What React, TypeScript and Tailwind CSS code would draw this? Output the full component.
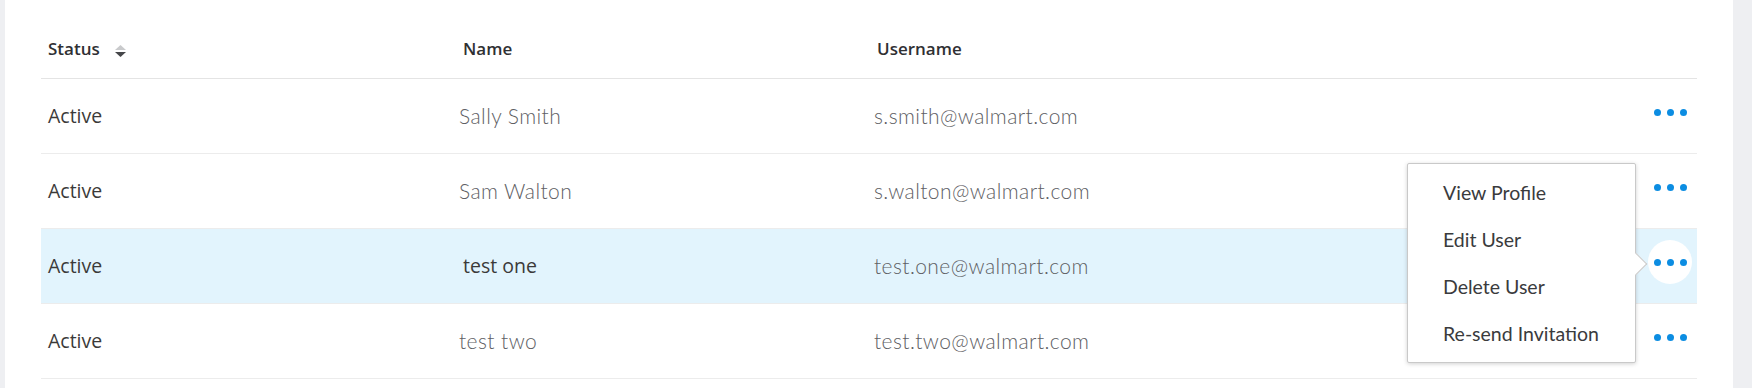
import React from "react";

type User = {
  status: string;
  name: string;
  username: string;
  selected?: boolean;
};

const users: User[] = [
  { status: "Active", name: "Sally Smith", username: "s.smith@walmart.com" },
  { status: "Active", name: "Sam Walton", username: "s.walton@walmart.com" },
  { status: "Active", name: "test one", username: "test.one@walmart.com", selected: true },
  { status: "Active", name: "test two", username: "test.two@walmart.com" },
];

const myriad = "font-['Open_Sans',sans-serif]";
const bogle = "font-['Lato',sans-serif]";

const SortIcon = () => (
  <svg width="11" height="12" viewBox="0 0 11 12" className="ml-[15px] mt-[3px]">
    <polygon points="0,5 5.5,0 11,5" fill="#c9cacc" />
    <polygon points="0,7 5.5,12 11,7" fill="#46474a" />
  </svg>
);

const Dots = () => (
  <div className="flex gap-[6px]">
    <span className="w-[7px] h-[7px] rounded-full bg-[#0c8de2]" />
    <span className="w-[7px] h-[7px] rounded-full bg-[#0c8de2]" />
    <span className="w-[7px] h-[7px] rounded-full bg-[#0c8de2]" />
  </div>
);

const ActionMenu = () => (
  <div className="absolute right-[56px] top-[-77px] w-[229px] h-[200px] bg-white border border-[#c9c9c9] rounded-[2px] shadow-[0_1px_4px_rgba(0,0,0,0.18)] pt-[5px] z-10">
    <div className="absolute right-[-9px] top-[92px] w-[16px] h-[16px] bg-white border-t border-r border-[#c9c9c9] rotate-45" />
    {["View Profile", "Edit User", "Delete User", "Re-send Invitation"].map((item) => (
      <div
        key={item}
        className={`relative h-[47px] flex items-center pl-[35px] text-[19.5px] text-[#3a3b3d] ${bogle}`}
      >
        {item}
      </div>
    ))}
  </div>
);

export default function App() {
  return (
    <div className="w-[1752px] h-[388px] flex bg-[#eeeff2] overflow-hidden">
      <div className="ml-[5px] w-[1728px] h-full bg-white pl-[36px] pr-[36px]">
        <div className="grid grid-cols-[415px_414px_1fr_80px] h-[79px] border-b border-[#e4e4e4] pt-[20px] items-center">
          <div className={`flex items-center pl-[7px] text-[17px] font-semibold text-[#2f3033] ${myriad}`}>
            Status
            <SortIcon />
          </div>
          <div className={`pl-[7px] text-[17px] font-semibold text-[#2f3033] ${myriad}`}>Name</div>
          <div className={`pl-[7px] text-[17px] font-semibold text-[#2f3033] ${myriad}`}>Username</div>
          <div />
        </div>
        {users.map((u) => (
          <div
            key={u.username}
            className={`grid grid-cols-[415px_414px_1fr_80px] h-[75px] border-b border-[#ececec] items-center ${
              u.selected ? "bg-[#e2f4fd]" : ""
            }`}
          >
            <div className={`pl-[7px] text-[19.5px] text-[#3b3a39] ${myriad}`}>{u.status}</div>
            {u.selected ? (
              <div className={`pl-[7px] text-[19.5px] text-[#3b3a39] ${myriad}`}>{u.name}</div>
            ) : (
              <div className={`pl-[3px] text-[21px] font-light tracking-[0.02em] text-[#5e6064] ${bogle}`}>
                {u.name}
              </div>
            )}
            <div className={`pl-[4px] text-[21px] font-light tracking-[0.02em] text-[#5e6064] ${bogle}`}>
              {u.username}
            </div>
            <div className="flex justify-end pr-[5px] pb-[8px]">
              <div
                className={`relative w-[44px] h-[44px] rounded-full flex items-center justify-center ${
                  u.selected ? "bg-white" : ""
                }`}
              >
                <Dots />
                {u.selected && <ActionMenu />}
              </div>
            </div>
          </div>
        ))}
      </div>
    </div>
  );
}
